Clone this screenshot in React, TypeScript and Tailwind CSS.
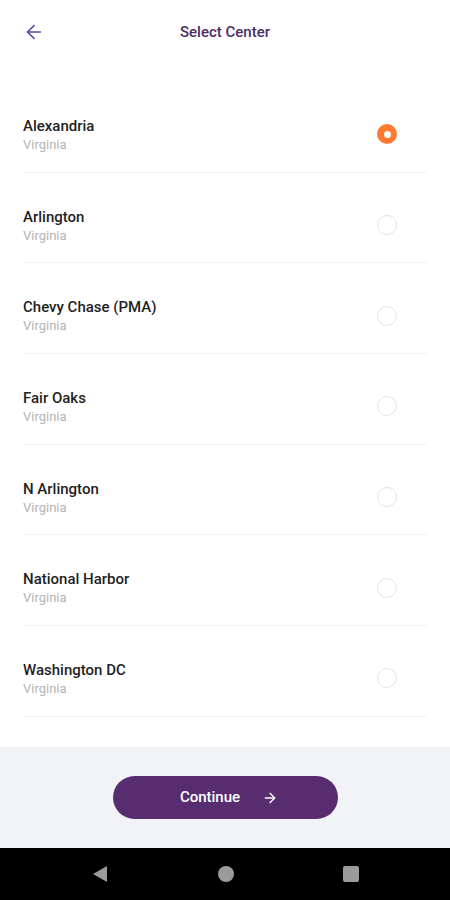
import { ArrowLeft, ArrowRight } from "lucide-react";
import { useState } from "react";

type Center = {
  name: string;
  state: string;
};

const centers: Center[] = [
  { name: "Alexandria", state: "Virginia" },
  { name: "Arlington", state: "Virginia" },
  { name: "Chevy Chase (PMA)", state: "Virginia" },
  { name: "Fair Oaks", state: "Virginia" },
  { name: "N Arlington", state: "Virginia" },
  { name: "National Harbor", state: "Virginia" },
  { name: "Washington DC", state: "Virginia" },
];

export default function App() {
  const [selected, setSelected] = useState("Alexandria");

  return (
    <div className="flex h-[900px] w-[450px] flex-col bg-white font-['Roboto',sans-serif]">
      <header className="relative flex h-16 items-center justify-center">
        <button className="absolute left-[23px] top-[21px] text-[#5e4a9a]">
          <ArrowLeft className="h-[22px] w-[22px]" strokeWidth={1.75} />
        </button>
        <h1 className="text-[15px] font-medium text-[#4b2c66]">Select Center</h1>
      </header>

      <main className="mt-[18px] flex-1 px-[23px]">
        {centers.map((center) => {
          const isSelected = center.name === selected;
          return (
            <button
              key={center.name}
              onClick={() => setSelected(center.name)}
              className="flex h-[90.7px] w-full items-center justify-between border-b border-[#f2f2f4] pb-[19px] pt-[34px] text-left"
            >
              <div>
                <p className="text-[15px] font-medium leading-5 text-[#1f1f1f]">{center.name}</p>
                <p className="mt-[1px] text-[13px] leading-4 text-[#b4b4b4]">{center.state}</p>
              </div>
              {isSelected ? (
                <span className="mr-[30px] flex h-5 w-5 items-center justify-center rounded-full bg-[#ff7a2e]">
                  <span className="h-[7px] w-[7px] rounded-full bg-white" />
                </span>
              ) : (
                <span className="mr-[30px] h-5 w-5 rounded-full border border-[#e2e2e2]" />
              )}
            </button>
          );
        })}
      </main>

      <footer className="flex h-[101px] items-center justify-center bg-[#f2f3f7]">
        <button className="flex h-[43px] w-[225px] items-center justify-center gap-[22px] rounded-full bg-[#572d70] pl-[8px] text-[15px] font-medium text-white">
          Continue
          <ArrowRight className="h-4 w-4" strokeWidth={2} />
        </button>
      </footer>

      <nav className="flex h-[52px] items-center justify-between bg-black px-[91px]">
        <svg width="18" height="18" viewBox="0 0 18 18">
          <polygon points="16,1 16,17 2,9" fill="#9b9b9b" />
        </svg>
        <span className="h-4 w-4 rounded-full bg-[#9b9b9b]" />
        <span className="h-4 w-4 rounded-[2px] bg-[#9b9b9b]" />
      </nav>
    </div>
  );
}
